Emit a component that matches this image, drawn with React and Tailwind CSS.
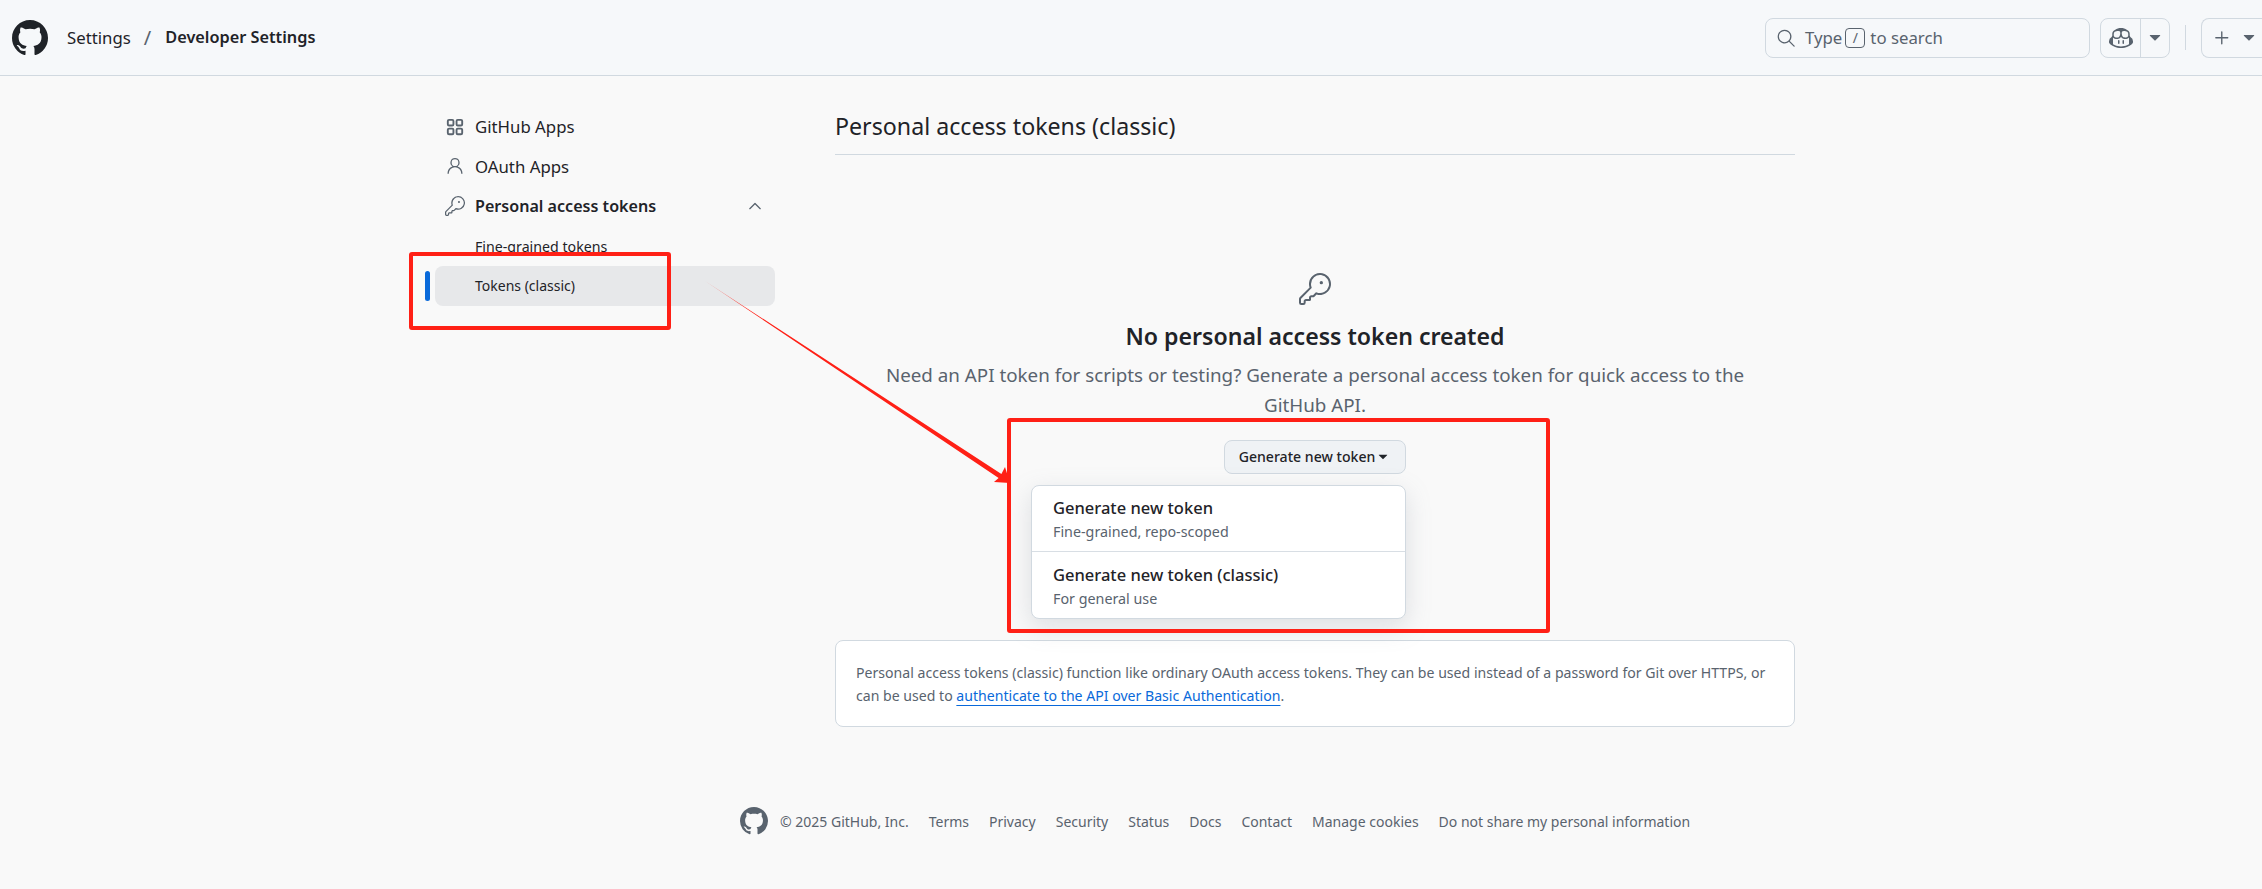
import React from "react";
import { GoChevronUp, GoCopilot, GoKey, GoPerson, GoPlus, GoSearch, GoTriangleDown } from "react-icons/go";

const footerLinks = ["Terms", "Privacy", "Security", "Status", "Docs", "Contact", "Manage cookies", "Do not share my personal information"];

const GithubMark = ({ className }) => (
  <svg viewBox="0 0 16 16" fill="currentColor" className={className}>
    <path d="M8 0c4.42 0 8 3.58 8 8a8.013 8.013 0 0 1-5.45 7.59c-.4.08-.55-.17-.55-.38 0-.27.01-1.13.01-2.2 0-.75-.25-1.23-.54-1.48 1.78-.2 3.65-.88 3.65-3.95 0-.88-.31-1.59-.82-2.15.08-.2.36-1.02-.08-2.12 0 0-.67-.22-2.2.82-.64-.18-1.32-.27-2-.27-.68 0-1.36.09-2 .27-1.53-1.03-2.2-.82-2.2-.82-.44 1.1-.16 1.92-.08 2.12-.51.56-.82 1.28-.82 2.15 0 3.06 1.86 3.75 3.64 3.95-.23.2-.44.55-.51 1.07-.46.21-1.61.55-2.33-.66-.15-.24-.6-.83-1.23-.82-.67.01-.27.38.01.53.34.19.73.9.82 1.13.16.45.68 1.31 2.69.94 0 .67.01 1.3.01 1.49 0 .21-.15.45-.55.38A7.995 7.995 0 0 1 0 8c0-4.42 3.58-8 8-8Z" />
  </svg>
);

const AppsIcon = ({ className }) => (
  <svg viewBox="0 0 16 16" fill="none" stroke="currentColor" strokeWidth="1.5" className={className}>
    <rect x="2.25" y="2.25" width="4.5" height="4.5" rx="1" />
    <rect x="9.25" y="2.25" width="4.5" height="4.5" rx="1" />
    <rect x="2.25" y="9.25" width="4.5" height="4.5" rx="1" />
    <rect x="9.25" y="9.25" width="4.5" height="4.5" rx="1" />
  </svg>
);

const Header = () => (
  <header className="h-[76px] flex items-center justify-between bg-[#f6f8fa] border-b border-[#d1d9e0] pl-3">
    <div className="flex items-center">
      <GithubMark className="w-9 h-9 text-[#1f2328]" />
      <span className="ml-[19px] text-[16.8px] text-[#1f2328]">Settings</span>
      <span className="ml-[13px] text-[20px] text-[#59636e]">/</span>
      <span className="ml-[14px] text-[16.3px] font-semibold text-[#1f2328]">Developer Settings</span>
    </div>
    <div className="flex items-center">
      <div className="w-[325px] h-10 flex items-center border border-[#d1d9e0] rounded-lg pl-[10px] text-[16.8px] text-[#59636e]">
        <GoSearch className="w-5 h-5" />
        <span className="ml-[9px]">Type</span>
        <span className="ml-[3px] mr-[5px] w-5 h-5 border border-[#59636e] rounded-[4px] flex items-center justify-center text-[14px]">/</span>
        <span>to search</span>
      </div>
      <div className="ml-[10px] w-[70px] h-10 flex items-center border border-[#d1d9e0] rounded-lg text-[#59636e]">
        <div className="w-10 h-full flex items-center justify-center border-r border-[#d1d9e0]">
          <GoCopilot className="w-6 h-6" />
        </div>
        <div className="flex-1 flex justify-center">
          <GoTriangleDown className="w-5 h-5" />
        </div>
      </div>
      <div className="ml-[15px] w-px h-[25px] bg-[#d1d9e0]" />
      <div className="ml-[15px] w-[61px] h-10 flex items-center border border-r-0 border-[#d1d9e0] rounded-l-lg pl-[9px] text-[#59636e]">
        <GoPlus className="w-[22px] h-[22px]" />
        <GoTriangleDown className="ml-[6px] w-5 h-5 shrink-0" />
      </div>
    </div>
  </header>
);

const SideItem = ({ icon: Icon, label, bold }) => (
  <div className={`h-[39.5px] flex items-center pl-[10px] text-[#1f2328] ${bold ? "text-[16.1px] font-semibold" : "text-[16.8px]"}`}>
    <Icon className="w-5 h-5 text-[#59636e] shrink-0" />
    <span className="ml-[10px]">{label}</span>
    {bold && <GoChevronUp className="ml-auto mr-[10px] w-5 h-5 text-[#59636e]" />}
  </div>
);

const Sidebar = () => (
  <aside className="w-[350px] pt-[31px] shrink-0 pl-[2px]">
    <div className="pl-[8px]">
      <SideItem icon={AppsIcon} label="GitHub Apps" />
      <SideItem icon={GoPerson} label="OAuth Apps" />
      <SideItem icon={GoKey} label="Personal access tokens" bold />
      <div className="h-[40px] flex items-center pt-[2px] pl-[32px] ml-[8px] text-[14.2px] text-[#1f2328]">Fine-grained tokens</div>
    </div>
    <div className="flex items-center">
      <div className="w-[5px] h-[30px] rounded-full bg-[#0969da] -ml-[2px]" />
      <div className="ml-[5px] w-[340px] h-10 rounded-lg bg-[#e7e8ea] flex items-center pl-10 text-[14px] text-[#1f2328]">Tokens (classic)</div>
    </div>
  </aside>
);

const Menu = () => (
  <div className="absolute right-0 top-[45px] w-[375px] h-[134px] bg-white border border-[#d1d9e0] rounded-lg shadow-[0_8px_24px_rgba(140,149,159,0.25)] text-left flex flex-col">
    <div className="h-[66px] pl-[21px] pt-[2px] flex flex-col justify-center border-b border-[#d8dee4]">
      <div className="text-[16.5px] font-medium leading-6 text-[#1f2328]">Generate new token</div>
      <div className="text-[14.3px] leading-6 text-[#59636e]">Fine-grained, repo-scoped</div>
    </div>
    <div className="flex-1 pl-[21px] pt-[3px] flex flex-col justify-center">
      <div className="text-[16.5px] font-medium leading-6 text-[#1f2328]">Generate new token (classic)</div>
      <div className="text-[14.3px] leading-6 text-[#59636e]">For general use</div>
    </div>
  </div>
);

const Main = () => (
  <main className="w-[960px] shrink-0 ml-[60px]">
    <div className="h-[79px] pt-[31px] border-b border-[#d1d9e0] text-[23.2px] leading-[38px] text-[#1f2328]">
      Personal access tokens (classic)
    </div>
    <div className="h-[485px] flex flex-col items-center pt-[118px]">
      <GoKey className="w-[32px] h-[32px] text-[#59636e]" />
      <h2 className="mt-[13px] text-[23.1px] font-semibold leading-[36px] text-[#1f2328]">No personal access token created</h2>
      <p className="mt-[6px] w-[880px] text-center text-[18.8px] leading-[30px] text-[#59636e]">
        Need an API token for scripts or testing? Generate a personal access token for quick access to the GitHub API.
      </p>
      <div className="relative mt-[20px]">
        <button className="w-[182px] h-[34px] flex items-center justify-center bg-[#eff2f5] border border-[#d1d9e0] rounded-lg text-[14.1px] font-medium text-[#1f2328]">
          Generate new token
          <GoTriangleDown className="w-4 h-4" />
        </button>
        <Menu />
      </div>
    </div>
    <div className="h-[87px] bg-white border border-[#d1d9e0] rounded-lg pl-5 pr-5 flex items-center text-[14.1px] leading-[23px] text-[#59636e]">
      <p>
        Personal access tokens (classic) function like ordinary OAuth access tokens. They can be used instead of a password for Git over HTTPS, or can be used to{" "}
        <a className="text-[#0969da] underline underline-offset-4">authenticate to the API over Basic Authentication</a>.
      </p>
    </div>
  </main>
);

const Footer = () => (
  <footer className="mt-[80px] flex items-center pl-[740px] text-[14px] text-[#59636e]">
    <GithubMark className="w-7 h-7" />
    <span className="ml-[12px] mr-[20px]">© 2025 GitHub, Inc.</span>
    <div className="flex gap-5">
      {footerLinks.map((link) => (
        <span key={link}>{link}</span>
      ))}
    </div>
  </footer>
);

const Annotations = () => (
  <>
    <div className="absolute left-[409px] top-[252px] w-[262px] h-[78px] border-[4px] border-[#ff2016] rounded-[3px]" />
    <div className="absolute left-[1007px] top-[418px] w-[543px] h-[215px] border-[4px] border-[#ff2016] rounded-[3px]" />
    <svg className="absolute left-0 top-0" width="2262" height="889">
      <defs>
        <linearGradient id="arrowFade" gradientUnits="userSpaceOnUse" x1="705" y1="281" x2="750" y2="310">
          <stop offset="0" stopColor="#ff2016" stopOpacity="0.4" />
          <stop offset="1" stopColor="#ff2016" />
        </linearGradient>
      </defs>
      <polygon points="705,281 1001.4,473.9 1005,467 1010,483 994,482 998.6,478.1" fill="url(#arrowFade)" />
    </svg>
  </>
);

export default function App() {
  return (
    <div className="relative w-[2262px] h-[889px] overflow-hidden bg-[#f9f9f9] font-['Noto_Sans',sans-serif]">
      <Header />
      <div className="flex pl-[425px]">
        <Sidebar />
        <Main />
      </div>
      <Footer />
      <Annotations />
    </div>
  );
}
